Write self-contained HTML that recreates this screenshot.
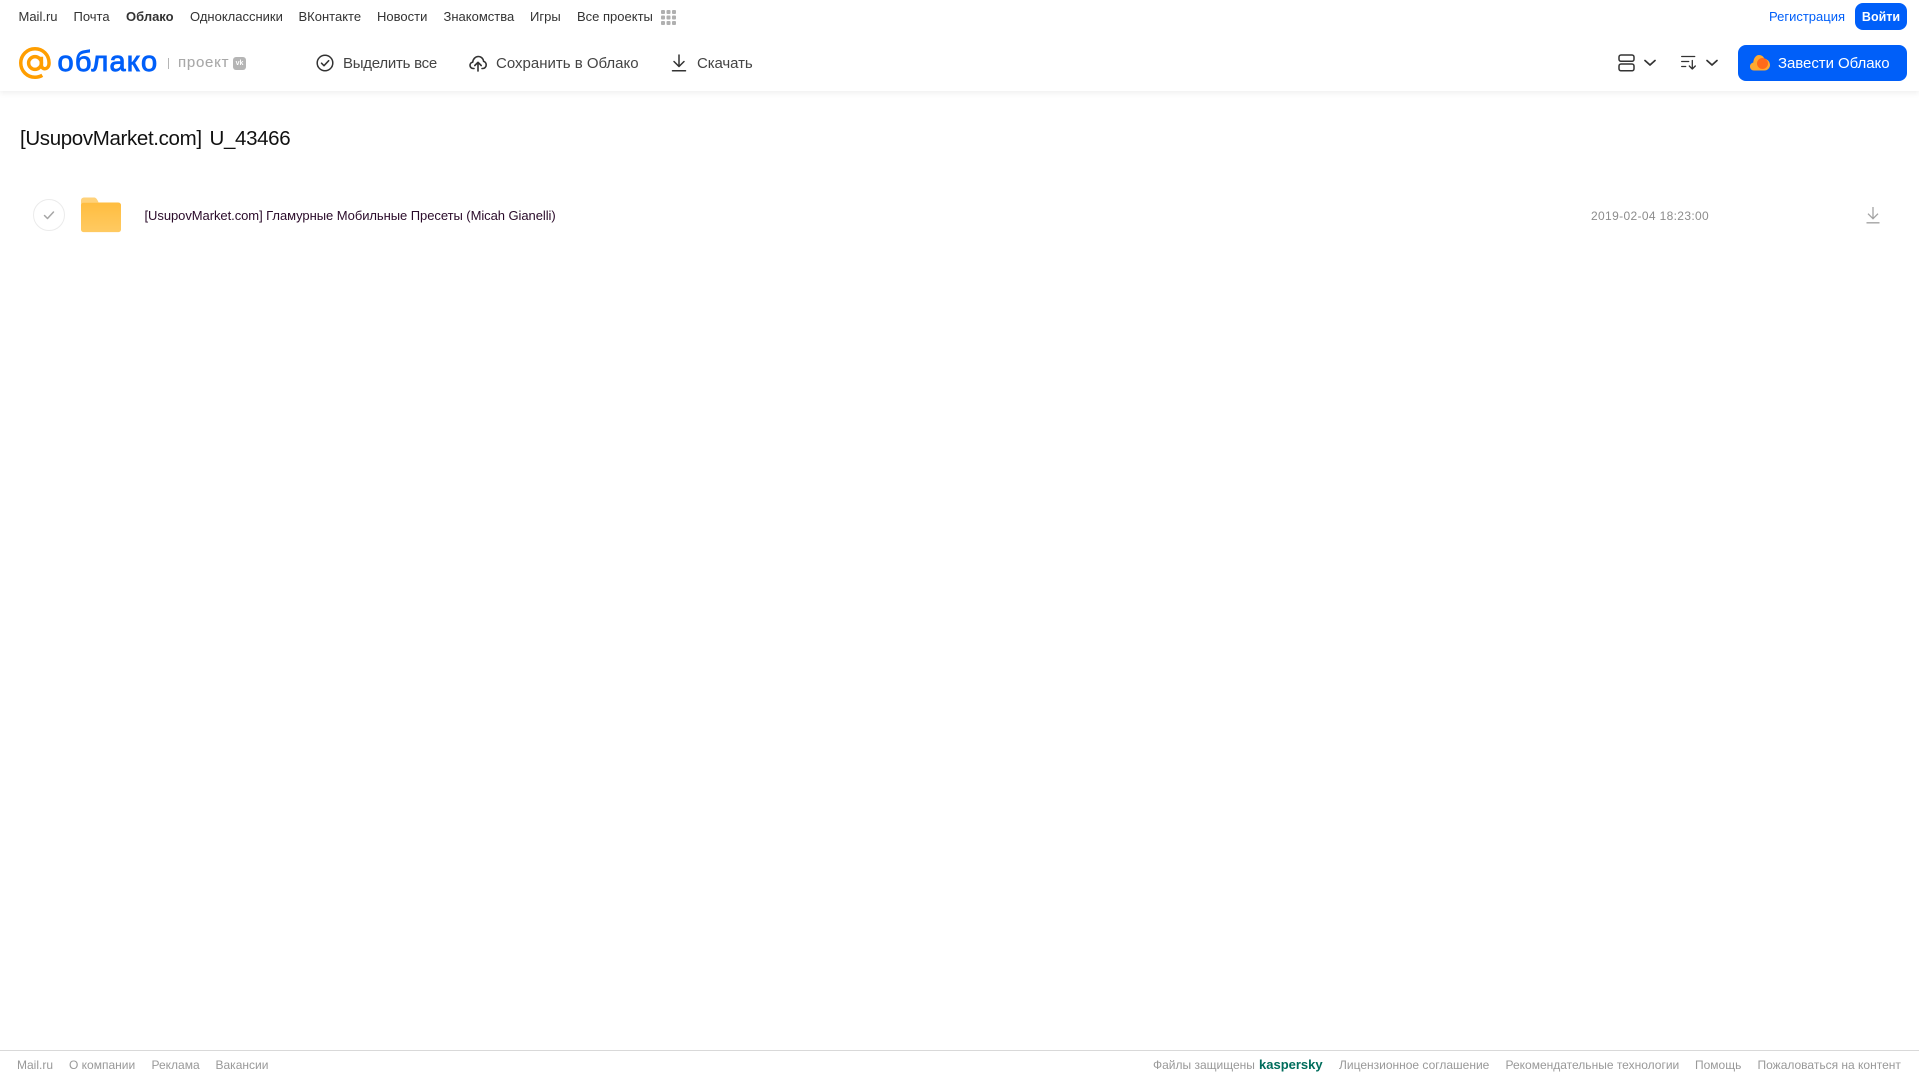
<!DOCTYPE html>
<html lang="ru"><head><meta charset="utf-8"><title>Облако</title>
<style>
html,body{margin:0;padding:0;width:1919px;height:1079px;overflow:hidden;background:#fff;font-family:"Liberation Sans",Arial,sans-serif}
.a{position:absolute;white-space:nowrap;line-height:20px}
.n{top:7px;font-size:13px;color:#333}
.h{top:53.500px;font-size:15px;color:#444}
.f{top:1055px;font-size:12px;color:#999}
svg{position:absolute;overflow:visible}
</style></head><body>
<div class="a" style="left:0;top:0;width:1919px;height:91px;background:#fff;box-shadow:0 2px 6px rgba(0,0,0,.07)"></div>

<span class="a n" style="left:18.500px">Mail.ru</span>
<span class="a n" style="left:73.500px">Почта</span>
<span class="a n" style="left:126px;font-weight:bold">Облако</span>
<span class="a n" style="left:190px">Одноклассники</span>
<span class="a n" style="left:298.500px">ВКонтакте</span>
<span class="a n" style="left:377px">Новости</span>
<span class="a n" style="left:443.500px">Знакомства</span>
<span class="a n" style="left:530px">Игры</span>
<span class="a n" style="left:577px">Все проекты</span>
<svg style="left:661px;top:10px" width="15" height="15" fill="#b0b0b0"><rect x="0" y="0" width="4" height="4" rx="1"/><rect x="5.500" y="0" width="4" height="4" rx="1"/><rect x="11" y="0" width="4" height="4" rx="1"/><rect x="0" y="5.500" width="4" height="4" rx="1"/><rect x="5.500" y="5.500" width="4" height="4" rx="1"/><rect x="11" y="5.500" width="4" height="4" rx="1"/><rect x="0" y="11" width="4" height="4" rx="1"/><rect x="5.500" y="11" width="4" height="4" rx="1"/><rect x="11" y="11" width="4" height="4" rx="1"/></svg>

<span class="a n" style="left:1769px;color:#005ff9">Регистрация</span>
<div class="a" style="left:1855px;top:3px;width:52px;height:27px;line-height:28px;border-radius:8px;background:#005ff9;color:#fff;font-size:12.500px;font-weight:bold;text-align:center">Войти</div>

<svg style="left:19px;top:47px" width="32" height="32" viewBox="0 0 33 33" fill="none" stroke="#ff9e00" stroke-width="3.600"><circle cx="16.500" cy="16.500" r="6.600"/><path d="M23.100 10v8.500c0 5.500 7.900 5.500 7.900-2C31 8 24.500 1.800 16.500 1.800S1.800 8.300 1.800 16.500 8.300 31.200 16.500 31.200c3 0 5.300-.7 7.500-2"/></svg>
<span class="a" style="left:57.500px;top:43.500px;font-size:29px;line-height:36px;color:#005ff9;-webkit-text-stroke:.9px #005ff9;letter-spacing:1.200px">облако</span>
<div class="a" style="left:168px;top:58px;width:1px;height:11px;background:#b5b5b5"></div>
<span class="a" style="left:178px;top:53px;font-size:15px;color:#a8a8a8;-webkit-text-stroke:.1px #a8a8a8;letter-spacing:.75px">проект</span>
<div class="a" style="left:233px;top:57px;width:13px;height:13px;border-radius:3px;background:#b5b5b5;color:#fff;font-size:7px;line-height:13px;text-align:center;font-weight:bold">vk</div>

<svg style="left:316px;top:54px" width="18" height="18" viewBox="0 0 18 18" fill="none" stroke="#333" stroke-width="1.500"><circle cx="9" cy="9" r="7.800"/><path d="M5.500 9.200l2.500 2.500 4.700-5" stroke-linecap="round" stroke-linejoin="round"/></svg>
<span class="a h" style="left:343px;letter-spacing:-.25px">Выделить все</span>
<svg style="left:469px;top:54px" width="18" height="18" viewBox="0 0 18 18" fill="none" stroke="#333" stroke-width="1.600" stroke-linecap="round" stroke-linejoin="round"><path d="M5 14.500H4.200C2.300 14.500 1 13 1 11.300c0-1.600 1.100-2.900 2.700-3.100C4 5 6.300 2.500 9.300 2.500c2.800 0 5 2.100 5.300 4.800 1.500.4 2.600 1.900 2.600 3.600 0 2-1.500 3.600-3.400 3.600H13"/><path d="M9 17V8.500M5.800 11.500L9 8.300l3.200 3.200"/></svg>
<span class="a h" style="left:496px">Сохранить в Облако</span>
<svg style="left:671px;top:54px" width="16" height="18" viewBox="0 0 16 18" fill="none" stroke="#333" stroke-width="1.500" stroke-linecap="round" stroke-linejoin="round"><path d="M8 1v11M3 7.500L8 12.500l5-5M1.500 16.800h13"/></svg>
<span class="a h" style="left:697px;letter-spacing:-.1px">Скачать</span>

<svg style="left:1618px;top:54px" width="17" height="18" viewBox="0 0 17 18" fill="none" stroke="#333" stroke-width="1.500"><rect x="1" y="1" width="15" height="6.300" rx="2"/><rect x="1" y="10" width="15" height="6.800" rx="2"/></svg>
<svg style="left:1644px;top:59px" width="12" height="8" viewBox="0 0 12 8" fill="none" stroke="#333" stroke-width="1.700" stroke-linecap="round" stroke-linejoin="round"><path d="M1 1.500l5 4.500 5-4.500"/></svg>
<svg style="left:1681px;top:55px" width="16" height="15" viewBox="0 0 16 15" fill="none" stroke="#333" stroke-width="1.300" stroke-linecap="round" stroke-linejoin="round"><path d="M.7 1.500h13M.7 6.500h7M.7 11.500h4"/><path d="M11.300 5.500v8.500M8.300 11l3 3 3-3"/></svg>
<svg style="left:1706px;top:59px" width="12" height="8" viewBox="0 0 12 8" fill="none" stroke="#333" stroke-width="1.700" stroke-linecap="round" stroke-linejoin="round"><path d="M1 1.500l5 4.500 5-4.500"/></svg>

<div class="a" style="left:1738px;top:45px;width:169px;height:36px;border-radius:8px;background:#005ff9"></div>
<svg style="left:1750px;top:54px" width="20" height="17" viewBox="0 0 20 17"><path d="M4 16.500C1.700 16.500 0 14.800 0 12.500c0-2 1.300-3.600 3.200-3.900C3.700 4 6 1 9 1c2.500 0 4.500 1.500 5.300 3.600C17.500 5 20 7.700 20 11c0 3-2.500 5.500-5.500 5.500z" fill="#ffa930"/><circle cx="12.500" cy="9.500" r="5.500" fill="#ff6a1a"/></svg>
<span class="a" style="left:1778px;top:53.500px;font-size:15px;color:#fff;letter-spacing:-.05px">Завести Облако</span>

<div class="a" style="left:20px;top:124.500px;font-size:20.500px;line-height:28px;color:#111;letter-spacing:-.35px;word-spacing:2.500px">[UsupovMarket.com] U_43466</div>

<svg style="left:33px;top:199px" width="32" height="32" viewBox="0 0 32 32" fill="none"><circle cx="16" cy="16" r="15.500" stroke="#ebebeb"/><path d="M11.500 16.500l3 3 6-6.500" stroke="#a6a6a6" stroke-width="1.500" stroke-linecap="round" stroke-linejoin="round"/></svg>
<svg style="left:81px;top:197px" width="40" height="36" viewBox="0 0 41 36"><defs><linearGradient id="g" x1="0" y1="0" x2="0" y2="1"><stop offset="0" stop-color="#ffbd40"/><stop offset="1" stop-color="#ffca62"/></linearGradient></defs><path d="M0 3a3 3 0 0 1 3-3h10c2 0 3 1 4 3l1 2h20a3 3 0 0 1 3 3v4H0z" fill="#ffd27a"/><rect x="0" y="5.500" width="41" height="30" rx="2.500" fill="url(#g)"/></svg>
<span class="a" style="left:144.500px;top:205.500px;font-size:13px;color:#2a0b2a;letter-spacing:-.06px">[UsupovMarket.com] Гламурные Мобильные Пресеты (Micah Gianelli)</span>
<span class="a" style="left:1591px;top:205.500px;font-size:12px;color:#8c8c8c;letter-spacing:.35px">2019-02-04 18:23:00</span>
<svg style="left:1866px;top:206px" width="14" height="18" viewBox="0 0 14 18" fill="none" stroke="#a3a3a3" stroke-width="1.300"><path d="M7 1v11.500M2 7.700l5 5 5-5M.5 16.800h13"/></svg>

<div class="a" style="left:0;top:1050px;width:1919px;height:1px;background:#d9d9d9"></div>
<span class="a f" style="left:17px">Mail.ru</span>
<span class="a f" style="left:69px">О компании</span>
<span class="a f" style="left:151.500px">Реклама</span>
<span class="a f" style="left:215.500px">Вакансии</span>
<span class="a f" style="left:1153px">Файлы защищены</span>
<span class="a f" style="left:1259px;color:#006d5c;font-size:13px;font-weight:bold">kaspersky</span>
<span class="a f" style="left:1339px">Лицензионное соглашение</span>
<span class="a f" style="left:1505.500px">Рекомендательные технологии</span>
<span class="a f" style="left:1695px">Помощь</span>
<span class="a f" style="left:1757.500px">Пожаловаться на контент</span>
</body></html>
